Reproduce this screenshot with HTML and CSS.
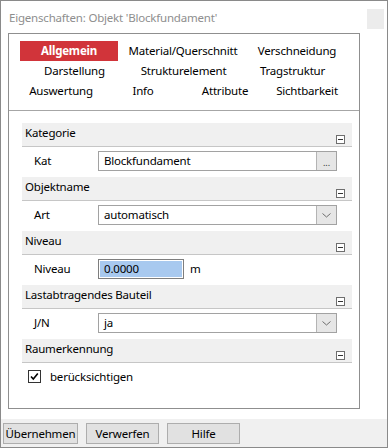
FILE: index.html
```html
<!DOCTYPE html>
<html lang="de">
<head>
    <meta charset="UTF-8">
    <title>Eigenschaften: Objekt 'Blockfundament'</title>
    <link rel="stylesheet" href="styles.css">
</head>
<body>
    <div class="window">
        <div class="titlebar">
            <span class="title">Eigenschaften: Objekt 'Blockfundament'</span>
            <span class="title-btn"></span>
        </div>

        <div class="panel">
            <div class="tabs">
                <div class="tab-row row-first">
                    <span class="tab active">Allgemein</span>
                    <span class="tab">Material/Querschnitt</span>
                    <span class="tab">Verschneidung</span>
                </div>
                <div class="tab-row row-three">
                    <span class="tab">Darstellung</span>
                    <span class="tab">Strukturelement</span>
                    <span class="tab">Tragstruktur</span>
                </div>
                <div class="tab-row row-four">
                    <span class="tab">Auswertung</span>
                    <span class="tab">Info</span>
                    <span class="tab">Attribute</span>
                    <span class="tab">Sichtbarkeit</span>
                </div>
            </div>

            <div class="content">
                <!-- Kategorie -->
                <div class="section-head">
                    <span>Kategorie</span>
                    <span class="collapse"></span>
                </div>
                <div class="prop-row">
                    <span class="prop-label">Kat</span>
                    <div class="field">
                        <span class="field-text">Blockfundament</span>
                        <span class="field-btn dots">...</span>
                    </div>
                </div>

                <!-- Objektname -->
                <div class="section-head">
                    <span>Objektname</span>
                    <span class="collapse"></span>
                </div>
                <div class="prop-row">
                    <span class="prop-label">Art</span>
                    <div class="field">
                        <span class="field-text">automatisch</span>
                        <span class="field-btn">
                            <svg width="9" height="5" viewBox="0 0 9 5"><polyline points="0.5,0.5 4.5,4 8.5,0.5" fill="none" stroke="#6d6d6d" stroke-width="1"/></svg>
                        </span>
                    </div>
                </div>

                <!-- Niveau -->
                <div class="section-head">
                    <span>Niveau</span>
                    <span class="collapse"></span>
                </div>
                <div class="prop-row">
                    <span class="prop-label">Niveau</span>
                    <div class="field field-num">
                        <span class="field-text">0.0000</span>
                    </div>
                    <span class="unit">m</span>
                </div>

                <!-- Lastabtragendes Bauteil -->
                <div class="section-head">
                    <span>Lastabtragendes Bauteil</span>
                    <span class="collapse"></span>
                </div>
                <div class="prop-row">
                    <span class="prop-label">J/N</span>
                    <div class="field">
                        <span class="field-text">ja</span>
                        <span class="field-btn">
                            <svg width="9" height="5" viewBox="0 0 9 5"><polyline points="0.5,0.5 4.5,4 8.5,0.5" fill="none" stroke="#6d6d6d" stroke-width="1"/></svg>
                        </span>
                    </div>
                </div>

                <!-- Raumerkennung -->
                <div class="section-head">
                    <span>Raumerkennung</span>
                    <span class="collapse"></span>
                </div>
                <div class="check-row">
                    <span class="checkbox">
                        <svg width="11" height="11" viewBox="0 0 11 11"><polyline points="2,5.5 4.3,8 8.8,2.5" fill="none" stroke="#000" stroke-width="1.6"/></svg>
                    </span>
                    <span>berücksichtigen</span>
                </div>
            </div>
        </div>

        <div class="footer">
            <button class="btn btn-wide">Übernehmen</button>
            <button class="btn">Verwerfen</button>
            <button class="btn">Hilfe</button>
        </div>
    </div>
</body>
</html>
```

FILE: styles.css
```css
html, body {
    margin: 0;
    padding: 0;
    background: #fff;
}
body {
    font-family: "Segoe UI", "Noto Sans", sans-serif;
    font-size: 11.5px;
    letter-spacing: -0.2px;
    color: #000;
}
.window {
    width: 388px;
    height: 448px;
    box-sizing: border-box;
    border: 1px solid #8a8a8a;
    display: flex;
    flex-direction: column;
    background: #fff;
}
.titlebar {
    height: 32px;
    display: flex;
    align-items: flex-start;
    flex-shrink: 0;
}
.title {
    color: #8e8e8e;
    padding: 9px 0 0 8px;
    line-height: 16px;
}
.title-btn {
    margin-left: auto;
    margin-top: 8px;
    margin-right: 3px;
    width: 17px;
    height: 20px;
    background: #ececec;
}

/* main panel */
.panel {
    margin: 0 27px 0 7px;
    height: 376px;
    box-sizing: border-box;
    border: 1px solid #8f8f8f;
    flex-shrink: 0;
}
.tabs {
    height: 77px;
    box-sizing: border-box;
    padding: 7px 0 0 11px;
    border-bottom: 1px solid #a6a6a6;
}
.tab-row {
    display: grid;
    height: 20px;
}
.row-first { grid-template-columns: 98px 130px 98px; }
.row-three { grid-template-columns: 109px 109px 109px; }
.row-four { grid-template-columns: 82px 82px 82px 82px; }
.tab {
    text-align: center;
    line-height: 19px;
    white-space: nowrap;
}
.tab.active {
    background: #d1343a;
    color: #fff;
    font-weight: bold;
}

.content {
    padding: 12px 7px 0 13px;
}
.section-head {
    height: 24px;
    box-sizing: border-box;
    background: #f0f0f0;
    border-bottom: 1px solid #c6c6c6;
    display: flex;
    justify-content: space-between;
    padding: 2px 7px 2px 3px;
    line-height: 16px;
}
.collapse {
    align-self: flex-end;
    width: 9px;
    height: 9px;
    box-sizing: border-box;
    border: 1px solid #6e6e6e;
    background: #fff;
    position: relative;
}
.collapse::after {
    content: "";
    position: absolute;
    left: 1px;
    right: 1px;
    top: 3px;
    height: 1px;
    background: #333;
}
.prop-row {
    height: 30px;
    box-sizing: border-box;
    padding: 4px 0 0 12px;
    display: flex;
    align-items: flex-start;
}
.prop-label {
    width: 64px;
    line-height: 20px;
}
.field {
    width: 239px;
    height: 20px;
    box-sizing: border-box;
    border: 1px solid #a2a2a2;
    background: #fff;
    display: flex;
}
.field-text {
    flex: 1;
    padding-left: 5px;
    line-height: 18px;
}
.field-btn {
    width: 19px;
    background: #e6e6e6;
    border-left: 1px solid #b4b4b4;
    display: flex;
    align-items: center;
    justify-content: center;
}
.field-btn.dots {
    align-items: flex-end;
    font-size: 9px;
    line-height: 14px;
    color: #333;
    letter-spacing: 0;
}
.field-num {
    width: 86px;
    border-color: #7e7e7e;
    padding: 1px;
}
.field-num .field-text {
    background: #a8c9ef;
    padding-left: 4px;
    line-height: 16px;
}
.unit {
    margin-left: 6px;
    line-height: 20px;
}
.check-row {
    display: flex;
    align-items: center;
    padding: 6px 0 0 6px;
    gap: 9px;
}
.checkbox {
    width: 13px;
    height: 13px;
    box-sizing: border-box;
    border: 1px solid #333;
    background: #fff;
    display: flex;
    align-items: center;
    justify-content: center;
}

/* bottom bar */
.footer {
    margin-top: 10px;
    flex: 1;
    background: #f0f0f0;
    display: flex;
    align-items: flex-start;
    gap: 8px;
    padding: 4px 0 0 2px;
}
.btn {
    width: 73px;
    height: 21px;
    box-sizing: border-box;
    border: 1px solid #adadad;
    background: #e1e1e1;
    font-family: inherit;
    font-size: 11.5px;
    letter-spacing: -0.2px;
    color: #000;
    padding: 0;
}
.btn-wide {
    width: 75px;
}
```
